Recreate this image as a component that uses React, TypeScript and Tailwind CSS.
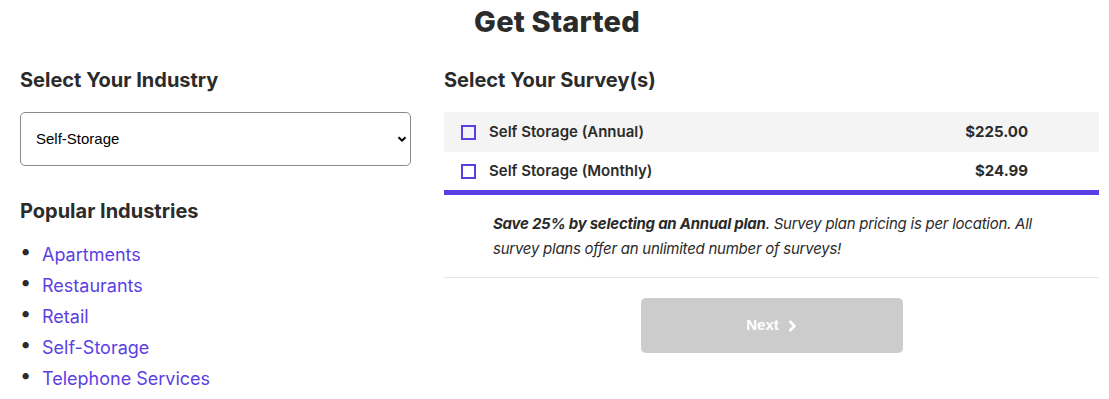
import React from "react";

const industries = ["Apartments", "Restaurants", "Retail", "Self-Storage", "Telephone Services"];

export default function App() {
  return (
    <div className="w-[1109px] h-[399px] bg-white text-[#2b2b2b] overflow-hidden" style={{ fontFamily: "Inter, 'Noto Sans', sans-serif" }}>
      <h1 className="text-center text-[29px] font-extrabold leading-[44px] tracking-[0.2px] pl-[5px]">Get Started</h1>
      <div className="flex pl-[20px] pr-[10px] mt-[22px]">
        <div className="w-[391px] shrink-0">
          <h2 className="text-[20px] font-bold leading-[28px]">Select Your Industry</h2>
          <div className="mt-[18px] h-[54px] border border-[#8a8a8a] rounded-[5px] flex items-center justify-between pl-[15px] pr-[3px]">
            <span className="text-[15px] text-black" style={{ fontFamily: "'Liberation Sans', Arial, sans-serif" }}>Self-Storage</span>
            <svg width="10" height="10" viewBox="0 0 10 10"><path d="M1.5 3.2 L5 6.7 L8.5 3.2" fill="none" stroke="#000" strokeWidth="2" /></svg>
          </div>
          <h2 className="text-[20px] font-bold leading-[28px] mt-[31px]">Popular Industries</h2>
          <ul className="mt-[14px]">
            {industries.map((n) => (
              <li key={n} className="flex items-center h-[31px]">
                <span className="w-[22px] text-[20px] leading-none pl-[0px] -mt-[7px]">•</span>
                <a className="text-[18px] text-[#5b3fe4]">{n}</a>
              </li>
            ))}
          </ul>
        </div>
        <div className="ml-[33px] flex-1">
          <h2 className="text-[20px] font-bold leading-[28px]">Select Your Survey(s)</h2>
          <div className="mt-[18px]">
            <div className="h-[40px] bg-[#f4f4f4] flex items-center pl-[17px] pr-[71px]">
              <span className="w-[15px] h-[15px] border-2 border-[#5b3fe4]" />
              <span className="ml-[13px] text-[15px] font-semibold flex-1">Self Storage (Annual)</span>
              <span className="text-[15px] font-bold">$225.00</span>
            </div>
            <div className="h-[38px] flex items-center pl-[17px] pr-[71px]">
              <span className="w-[15px] h-[15px] border-2 border-[#5b3fe4]" />
              <span className="ml-[13px] text-[15px] font-semibold flex-1">Self Storage (Monthly)</span>
              <span className="text-[15px] font-bold">$24.99</span>
            </div>
            <div className="h-[5px] bg-[#5b3fe4]" />
            <div className="border-b border-[#e6e6e6] pl-[49px] pr-[48px] pt-[16px] pb-[16px]">
              <p className="text-[15px] italic leading-[25px] tracking-[-0.25px]">
                <b className="font-bold">Save 25% by selecting an Annual plan</b>. Survey plan pricing is per location. All survey plans offer an unlimited number of surveys!
              </p>
            </div>
            <div className="flex justify-center mt-[20px]">
              <button className="w-[262px] h-[55px] rounded-[5px] bg-[#cccccc] text-white font-bold text-[15px] flex items-center justify-center gap-[8px]" style={{ fontFamily: "'Liberation Sans', Arial, sans-serif" }}>
                Next
                <svg width="10" height="14" viewBox="0 0 10 14"><path d="M2.5 2 L7.5 7 L2.5 12" fill="none" stroke="#fff" strokeWidth="2.5" /></svg>
              </button>
            </div>
          </div>
        </div>
      </div>
    </div>
  );
}
